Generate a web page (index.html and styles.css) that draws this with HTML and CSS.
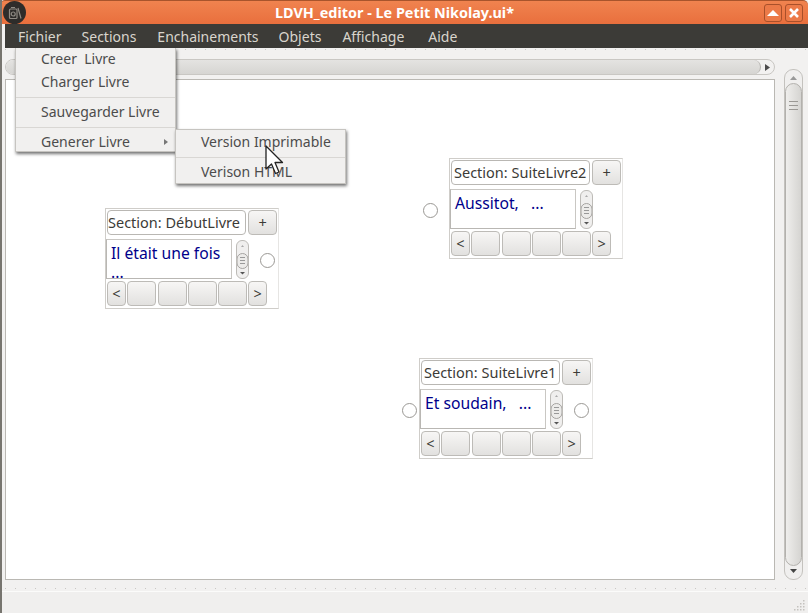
FILE: index.html
```html
<!DOCTYPE html>
<html lang="fr">
<head>
    <meta charset="UTF-8">
    <title>LDVH_editor - Le Petit Nikolay.ui*</title>
    <link rel="stylesheet" href="styles.css">
</head>
<body>
<div class="window">
    <div class="titlebar">
        <div class="appicon">
            <svg width="14" height="14" viewBox="0 0 14 14" fill="none" stroke="#8f8b84" stroke-width="1.2">
                <rect x="1.5" y="3" width="7.5" height="9.5" rx="1"/>
                <circle cx="5.2" cy="8" r="2"/>
                <path d="M3 1.5h4M10 2l3 10.5"/>
            </svg>
        </div>
        <div class="title">LDVH_editor - Le Petit Nikolay.ui*</div>
        <div class="winbtn">
            <svg width="12" height="6" viewBox="0 0 12 6"><path d="M0 6L6 0l6 6z" fill="#fff"/></svg>
        </div>
        <div class="winbtn">
            <svg width="10" height="10" viewBox="0 0 10 10"><path d="M1 1l8 8M9 1l-8 8" stroke="#fff" stroke-width="2.6"/></svg>
        </div>
    </div>

    <div class="menubar">
        <span class="menubar-item m-fichier">Fichier</span>
        <span class="menubar-item m-sections">Sections</span>
        <span class="menubar-item m-enchainements">Enchainements</span>
        <span class="menubar-item m-objets">Objets</span>
        <span class="menubar-item m-affichage">Affichage</span>
        <span class="menubar-item">Aide</span>
    </div>

    <div class="main">
        <div class="left">
            <div class="hscroll">
                <div class="hscroll-thumb"></div>
                <svg class="hscroll-arrow" width="5" height="7" viewBox="0 0 5 7"><path d="M0 0l5 3.500L0 7z" fill="#4c4c4c"/></svg>
            </div>
            <div class="canvas">
                <div class="node node-debut">
                    <div class="node-row">
                        <div class="section-name section-tight">Section: DébutLivre</div>
                        <div class="btn btn-plus">+</div>
                    </div>
                    <div class="node-row node-mid">
                        <div class="node-text">Il était une fois<br>...</div>
                        <div class="mini-scroll">
                            <svg width="11" height="38" viewBox="0 0 11 38" fill="none">
                                <path d="M4 6l1.500-2L7 6z" fill="#aaa"/>
                                <rect x="0" y="12.500" width="11" height="15" rx="5.500" fill="#ecebe9" stroke="#a5a3a0"/>
                                <path d="M3 16.500h5M3 19.500h5M3 22.500h5" stroke="#999"/>
                                <path d="M3 31h5l-2.500 2.500z" fill="#555"/>
                            </svg>
                        </div>
                    </div>
                    <div class="node-row node-nav">
                        <div class="btn btn-nav">&lt;</div>
                        <div class="btn btn-page"></div>
                        <div class="btn btn-page"></div>
                        <div class="btn btn-page"></div>
                        <div class="btn btn-page"></div>
                        <div class="btn btn-nav">&gt;</div>
                    </div>
                    <div class="radio radio-right"></div>
                </div>

                <div class="node node-suite2">
                    <div class="node-row">
                        <div class="section-name">Section: SuiteLivre2</div>
                        <div class="btn btn-plus">+</div>
                    </div>
                    <div class="node-row node-mid">
                        <div class="node-text">Aussitot, &nbsp; ...</div>
                        <div class="mini-scroll">
                            <svg width="11" height="38" viewBox="0 0 11 38" fill="none">
                                <path d="M4 6l1.500-2L7 6z" fill="#aaa"/>
                                <rect x="0" y="12.500" width="11" height="15" rx="5.500" fill="#ecebe9" stroke="#a5a3a0"/>
                                <path d="M3 16.500h5M3 19.500h5M3 22.500h5" stroke="#999"/>
                                <path d="M3 31h5l-2.500 2.500z" fill="#555"/>
                            </svg>
                        </div>
                    </div>
                    <div class="node-row node-nav">
                        <div class="btn btn-nav">&lt;</div>
                        <div class="btn btn-page"></div>
                        <div class="btn btn-page"></div>
                        <div class="btn btn-page"></div>
                        <div class="btn btn-page"></div>
                        <div class="btn btn-nav">&gt;</div>
                    </div>
                    <div class="radio radio-left"></div>
                </div>

                <div class="node node-suite1">
                    <div class="node-row">
                        <div class="section-name">Section: SuiteLivre1</div>
                        <div class="btn btn-plus">+</div>
                    </div>
                    <div class="node-row node-mid">
                        <div class="node-text">Et soudain, &nbsp; ...</div>
                        <div class="mini-scroll">
                            <svg width="11" height="38" viewBox="0 0 11 38" fill="none">
                                <path d="M4 6l1.500-2L7 6z" fill="#aaa"/>
                                <rect x="0" y="12.500" width="11" height="15" rx="5.500" fill="#ecebe9" stroke="#a5a3a0"/>
                                <path d="M3 16.500h5M3 19.500h5M3 22.500h5" stroke="#999"/>
                                <path d="M3 31h5l-2.500 2.500z" fill="#555"/>
                            </svg>
                        </div>
                    </div>
                    <div class="node-row node-nav">
                        <div class="btn btn-nav">&lt;</div>
                        <div class="btn btn-page"></div>
                        <div class="btn btn-page"></div>
                        <div class="btn btn-page"></div>
                        <div class="btn btn-page"></div>
                        <div class="btn btn-nav">&gt;</div>
                    </div>
                    <div class="radio radio-near"></div>
                    <div class="radio radio-right"></div>
                </div>
            </div>
        </div>

        <div class="vscroll">
            <svg class="vscroll-up" width="7" height="4" viewBox="0 0 7 4"><path d="M0 4l3.500-4L7 4z" fill="#999"/></svg>
            <div class="vscroll-thumb">
                <div class="grip"></div>
                <div class="grip"></div>
                <div class="grip"></div>
            </div>
            <svg class="vscroll-down" width="7" height="4" viewBox="0 0 7 4"><path d="M0 0l3.500 4L7 0z" fill="#444"/></svg>
        </div>
    </div>

    <div class="statusbar">
        <svg class="size-grip" width="12" height="12" viewBox="0 0 12 12" fill="#c4c2be">
            <rect x="9" y="0" width="1.500" height="1.500"/>
            <rect x="6" y="3" width="1.500" height="1.500"/>
            <rect x="9" y="3" width="1.500" height="1.500"/>
            <rect x="3" y="6" width="1.500" height="1.500"/>
            <rect x="6" y="6" width="1.500" height="1.500"/>
            <rect x="9" y="6" width="1.500" height="1.500"/>
            <rect x="0" y="9" width="1.500" height="1.500"/>
            <rect x="3" y="9" width="1.500" height="1.500"/>
            <rect x="6" y="9" width="1.500" height="1.500"/>
            <rect x="9" y="9" width="1.500" height="1.500"/>
        </svg>
    </div>

    <div class="menu menu-fichier">
        <div class="menu-item">Creer &nbsp;Livre</div>
        <div class="menu-item">Charger Livre</div>
        <div class="menu-sep"></div>
        <div class="menu-item">Sauvegarder Livre</div>
        <div class="menu-sep"></div>
        <div class="menu-item">Generer Livre
            <svg class="submenu-arrow" width="4" height="6" viewBox="0 0 4 6"><path d="M0 0l4 3-4 3z" fill="#777"/></svg>
        </div>
    </div>
    <div class="menu menu-generer">
        <div class="menu-item">Version Imprimable</div>
        <div class="menu-sep"></div>
        <div class="menu-item">Verison HTML</div>
    </div>

    <svg class="cursor" width="20" height="30" viewBox="0 0 20 30">
        <path d="M1 1v23l5.500-5 4 9.500 3.500-1.500-4-9.500h7.500z" fill="#fff" stroke="#222" stroke-width="1.300" stroke-linejoin="round"/>
    </svg>
</div>
</body>
</html>
```

FILE: styles.css
```css
* {
    box-sizing: border-box;
}
html, body {
    margin: 0;
    padding: 0;
}
body {
    font-family: "Noto Sans", sans-serif;
    overflow: hidden;
}
.window {
    position: relative;
    width: 808px;
    height: 613px;
    display: flex;
    flex-direction: column;
    background: #f2f1f0;
    border-left: 2px solid #77756f;
    overflow: hidden;
}

/* title bar */
.titlebar {
    height: 24px;
    margin-left: -2px;
    display: flex;
    align-items: center;
    gap: 3px;
    padding: 0 5px 0 3px;
    background: linear-gradient(#f0834f, #e96f3d);
    border-top: 1px solid #a8542c;
    border-radius: 5px 5px 0 0;
}
.appicon {
    width: 23px;
    height: 23px;
    border-radius: 50%;
    background: #2e2c2a;
    display: flex;
    align-items: center;
    justify-content: center;
}
.title {
    flex: 1;
    text-align: center;
    color: #fff;
    font-size: 14.400px;
    font-weight: 700;
    padding-left: 4px;
    padding-right: 5px;
    white-space: nowrap;
}
.winbtn {
    width: 18px;
    height: 18px;
    border: 1px solid #a9502a;
    border-radius: 3px;
    background: #ec7a48;
    display: flex;
    align-items: center;
    justify-content: center;
}

/* menu bar */
.menubar {
    height: 24px;
    margin-left: 3px;
    padding-left: 13px;
    display: flex;
    align-items: center;
    background: #3c3b37;
    color: #d9d5cd;
    font-size: 14px;
}
.menubar-item {
    white-space: nowrap;
}
.m-fichier { margin-right: 20px; }
.m-sections { margin-right: 21px; }
.m-enchainements { margin-right: 20px; }
.m-objets { margin-right: 21px; }
.m-affichage { margin-right: 24px; }

/* central area, with the two rows of toolbar dots */
.main {
    flex: 1;
    display: flex;
    padding: 11px 5px 11px 3px;
    background-color: #f2f1f0;
    background-image:
        linear-gradient(90deg, #c9c7c3 1px, transparent 1px),
        linear-gradient(90deg, #c9c7c3 1px, transparent 1px);
    background-size: 10px 1px, 10px 1px;
    background-position: 3px 1px, 3px calc(100% - 2px);
    background-repeat: repeat-x;
}
.left {
    width: 770px;
    display: flex;
    flex-direction: column;
    gap: 4px;
}
.hscroll {
    height: 16px;
    display: flex;
    align-items: center;
    border: 1px solid #c9c7c3;
    border-radius: 8px;
    padding-right: 3px;
    background: #f2f1f0;
}
.hscroll-thumb {
    flex: 1;
    height: 14px;
    margin-right: 4px;
    border-right: 1px solid #b5b3af;
    border-radius: 7px;
    background: linear-gradient(#e4e3e1, #d6d5d2);
}
.hscroll-arrow {
    margin-right: 1px;
}
.canvas {
    position: relative;
    flex: 1;
    background: #fff;
    border: 1px solid #bab8b3;
}
.vscroll {
    position: relative;
    width: 19px;
    margin: 10px 0 0 9px;
    border: 1px solid #c4c2be;
    border-radius: 9px;
    background: #f0efee;
}
.vscroll-up {
    position: absolute;
    left: 5px;
    top: 6px;
}
.vscroll-down {
    position: absolute;
    left: 5px;
    bottom: 6px;
}
.vscroll-thumb {
    position: absolute;
    left: 0;
    right: 0;
    top: 13px;
    bottom: 13px;
    border: 1px solid #b3b1ad;
    border-radius: 9px;
    background: linear-gradient(90deg, #efeeec, #d5d4d1);
    padding-top: 17px;
}
.grip {
    height: 1px;
    margin: 0 3px 3px;
    background: #9a9894;
}
.statusbar {
    position: relative;
    height: 22px;
    background: #f0efee;
    border-top: 1px solid #fbfbfa;
}
.size-grip {
    position: absolute;
    right: 2px;
    bottom: 1px;
}

/* nodes on the canvas */
.node {
    position: absolute;
    width: 174px;
    height: 101px;
    border: 1px solid #cfcdc9;
    border-right-color: #e6e5e3;
    background: #fff;
    padding: 1px;
    display: flex;
    flex-direction: column;
    gap: 3px;
    font-size: 14.500px;
    color: #3c3b37;
}
.node-debut { left: 99px; top: 128px; }
.node-suite2 { left: 443px; top: 78px; }
.node-suite1 { left: 413px; top: 278px; }

.node-row {
    display: flex;
    gap: 2px;
}
.section-name {
    width: 140px;
    height: 25px;
    line-height: 23px;
    padding-left: 2px;
    background: #fff;
    border: 1px solid #b9b7b3;
    border-radius: 4px;
    white-space: nowrap;
    overflow: hidden;
}
.section-tight {
    padding-left: 0;
}
.btn {
    height: 25px;
    line-height: 22px;
    text-align: center;
    border: 1px solid #bdbbb7;
    border-radius: 4px;
    background: linear-gradient(#f7f6f5, #e2e1df);
}
.btn-plus {
    width: 29px;
}
.btn-nav {
    width: 19px;
}
.btn-page {
    width: 29px;
}
.node-mid {
    height: 40px;
    margin-top: 1px;
    margin-left: -1px;
    gap: 4px;
}
.node-nav {
    margin-top: -1px;
    gap: 1.250px;
}
.node-text {
    width: 126px;
    height: 40px;
    padding: 4px 4px 0;
    overflow: hidden;
    background: #fff;
    border: 1px solid #b9b7b3;
    border-top-color: #c9c7c3;
    border-right-color: #c9c7c3;
    color: #00008b;
    font-size: 15.700px;
    line-height: 19px;
    white-space: nowrap;
}
.mini-scroll {
    width: 13px;
    height: 39px;
    margin-top: 1px;
    border: 1px solid #bdbbb7;
    border-radius: 6px;
    background: #f0efee;
    overflow: hidden;
}
.mini-scroll svg {
    display: block;
}
.radio {
    position: absolute;
    top: 44px;
    width: 15px;
    height: 15px;
    border: 1px solid #9a9894;
    border-radius: 50%;
    background: #fff;
}
.radio-left {
    left: -27px;
}
.radio-near {
    left: -18px;
}
.radio-right {
    left: 154px;
}

/* open menus */
.menu {
    position: absolute;
    background: #f1f0ef;
    border: 1px solid #c6c4c0;
    box-shadow: 1px 2px 3px rgba(0, 0, 0, 0.55);
    font-size: 14px;
    color: #4c4c4c;
}
.menu-fichier {
    left: 13px;
    top: 48px;
    width: 161px;
    height: 104px;
    border-top: none;
}
.menu-generer {
    left: 173px;
    top: 129px;
    width: 171px;
    height: 55px;
    padding-top: 1px;
}
.menu-item {
    position: relative;
    height: 23px;
    line-height: 22px;
    padding-left: 25px;
    white-space: nowrap;
}
.menu-sep {
    height: 1px;
    margin: 3px 0;
    background: #d9d7d4;
}
.submenu-arrow {
    position: absolute;
    right: 7px;
    top: 8px;
}
.cursor {
    position: absolute;
    left: 263px;
    top: 145px;
}
```
